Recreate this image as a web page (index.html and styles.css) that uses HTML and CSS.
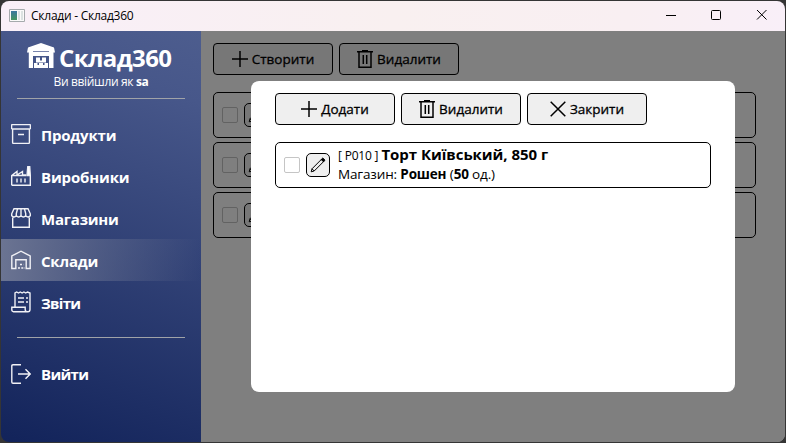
FILE: index.html
```
<!DOCTYPE html>
<html lang="uk">
<head>
<meta charset="utf-8">
<title>Склади - Склад360</title>
<link rel="stylesheet" href="styles.css">
</head>
<body>
<svg class="defs" width="0" height="0">
  <symbol id="plus" viewBox="0 0 16 16"><path d="M8 0v16M0 8h16"/></symbol>
  <symbol id="cross" viewBox="0 0 16 16"><path d="M.7.7l14.6 14.6M15.3.7L.7 15.3"/></symbol>
  <symbol id="trash" viewBox="0 0 16 18"><path d="M0 1.700h16M5 .8h6M2 2v15.200h12V2M6.300 5v9M9.700 5v9"/></symbol>
  <symbol id="pencil" viewBox="0 0 16 16"><path d="M1.200 14.800l.8-3L11.600 2.200l2.200 2.200-9.600 9.600zM2 11.800l2.200 2.200"/><path class="solid" d="M11.200 2.600l1.600-1.600 2.200 2.200-1.600 1.600z"/></symbol>
</svg>
<div class="window">
  <header class="titlebar">
    <svg class="app-icon" viewBox="0 0 16 14"><defs><linearGradient id="g" x2="0" y2="1"><stop offset="0" stop-color="#3c78a0"/><stop offset="1" stop-color="#46965f"/></linearGradient></defs><path fill="#fafafa" stroke="#a5aaad" d="M.5.5h15v12H.5z"/><path fill="url(#g)" d="M2 2h6v9H2z"/><path fill="#dce2e2" d="M9 2h2v9H9zM12 2h2v9h-2z"/></svg>
    <span class="title">Склади - Склад360</span>
    <svg class="controls" viewBox="0 0 104 12"><path d="M1 6.500h10"/><rect x="46.500" y="1.500" width="9" height="9" rx="1"/><path d="M92 1l9.500 9.500M101.500 1L92 10.500"/></svg>
  </header>
  <div class="body">
    <nav class="sidebar">
      <div class="brand">
        <svg class="logo" viewBox="0 0 28 26"><path fill="#fff" d="M14 0L27 4.500 28 9.500h-1.500V25H22V13H6v12H1.800V9.500H0l1-5z"/><path stroke="#7884ac" d="M6 8.500h16"/><path fill="#fff" d="M9 14.500h4v3h2v-3h4v5H9zM7 20h3.500v2h1.500v-2h4v2h1.500v-2H21v5H7z"/></svg>
        <span class="brand-name">Склад360</span>
      </div>
      <div class="login">Ви ввійшли як <b>sa</b></div>
      <hr>
      <ul class="menu">
        <li><svg viewBox="0 0 20 20"><rect x=".6" y=".6" width="18.800" height="4.400" rx=".8"/><path d="M1.600 5v13.500q0 .9.900.9h15q.9 0 .9-.9V5M7 10.500h6"/></svg><span>Продукти</span></li>
        <li><svg viewBox="0 0 20 20"><path d="M.7 19.300V9.500L6 5.500v3.500l5.500-3.500V9h3.800M19.300 9v10.300H.7M.7 9.500H15"/><path class="white" d="M16 9.500L16.800.5h1.900l.6 9z"/><path d="M6 12.500v4M10 12.500v4M14 12.500v4"/></svg><span class="makers">Виробники</span></li>
        <li><svg viewBox="0 0 20 20"><path d="M3 .8h14l2.300 5v2q-2.300 2.500-4.600 0-2.350 2.500-4.700 0-2.350 2.500-4.700 0-2.300 2.500-4.600 0v-2zM5.300 7.800V5.500L6.500 1M10 7.800V1M14.700 7.800V5.500L13.500 1M1.700 9.500v9.800h16.600V9.500"/></svg><span>Магазини</span></li>
        <li class="active"><svg viewBox="0 0 20 20"><path d="M.8 18.500V6L10 1.200 19.200 6v12.500h-4V9.700H4.800v8.800z"/><path stroke-dasharray="2 1.300" d="M7 18h7M9 14.500h3.500"/></svg><span>Склади</span></li>
        <li><svg class="receipt" viewBox="0 0 20 22"><path d="M4 16V2l1.700-1 1.800 1L9.300 1l1.800 1 1.800-1 1.800 1 1.800-1L19 2v16.500q0 2.200-2.200 2.200H2.500Q.8 20.700.8 18.500v-2.300h13.400v2.300q0 2.200 2.200 2.200M7 7h6M7 11h6M15 7h2M15 11h2"/></svg><span class="tight">Звіти</span></li>
      </ul>
      <hr class="second">
      <ul class="menu exit">
        <li><svg viewBox="0 0 20 20"><path d="M10 .8H2Q.8.800.8 2v16q0 1.200 1.200 1.200h8M7 10h12M14.500 5.200L19.200 10l-4.700 4.800"/></svg><span class="tight">Вийти</span></li>
      </ul>
    </nav>
    <main class="content">
      <div class="toolbar">
        <button><svg class="i16"><use href="#plus"/></svg><span>Створити</span></button>
        <button><svg class="i18"><use href="#trash"/></svg><span>Видалити</span></button>
      </div>
      <div class="card"><i class="check"></i><span class="edit"><svg><use href="#pencil"/></svg></span></div>
      <div class="card"><i class="check"></i><span class="edit"><svg><use href="#pencil"/></svg></span></div>
      <div class="card"><i class="check"></i><span class="edit"><svg><use href="#pencil"/></svg></span></div>
      <div class="overlay">
        <section class="dialog">
          <div class="toolbar">
            <button><svg class="i16"><use href="#plus"/></svg><span>Додати</span></button>
            <button><svg class="i18"><use href="#trash"/></svg><span>Видалити</span></button>
            <button><svg class="i16"><use href="#cross"/></svg><span>Закрити</span></button>
          </div>
          <div class="card"><i class="check"></i><span class="edit"><svg><use href="#pencil"/></svg></span>
            <div class="info">
              <div class="line1"><span class="code">[ P010 ]</span> <b class="name">Торт Київський, 850 г</b></div>
              <div class="line2">Магазин: <b>Рошен</b> (<b>50</b> од.)</div>
            </div>
          </div>
        </section>
      </div>
    </main>
  </div>
</div>
</body>
</html>
```
FILE: styles.css
```
* { box-sizing: border-box; }
body {
  margin: 0;
  height: 443px;
  padding: 1px;
  overflow: hidden;
  background: #353535;
  font-family: "Open Sans", "Noto Sans", sans-serif;
  color: #000;
}
.defs { position: absolute; }
svg { flex: none; fill: none; }
span, b { white-space: nowrap; }
.window {
  width: 784px;
  height: 441px;
  display: flex;
  flex-direction: column;
  border-radius: 8px;
  overflow: hidden;
}
.titlebar {
  height: 30px;
  flex: none;
  display: flex;
  align-items: center;
  padding: 0 16px 0 8px;
  background: linear-gradient(90deg, #f9eff8, #f9f0f0 50%, #f9eff2 80%, #f9eff8);
}
.app-icon { width: 16px; height: 14px; margin-top: -1px; }
.title { margin-left: 6px; margin-top: -1px; font-size: 12px; letter-spacing: -0.25px; }
.controls { width: 104px; height: 12px; margin-left: auto; margin-top: -2px; stroke: #000; stroke-width: 1; }
.body { flex: 1; display: flex; min-height: 0; }
.sidebar {
  width: 200px;
  flex: none;
  color: #fff;
  background: linear-gradient(200deg, #4d5d8e, #47578a 15%, #12235a);
}
.brand { display: flex; align-items: center; height: 32px; margin-top: 11px; padding-left: 26px; }
.logo { width: 28px; height: 26px; margin-top: -5px; }
.brand-name { margin-left: 4px; font-size: 24px; line-height: 30px; font-weight: 700; letter-spacing: -0.6px; }
.login { height: 16px; line-height: 16px; font-size: 12px; text-align: center; letter-spacing: -0.35px; }
hr { border: 0; height: 1px; background: #a0a3a8; margin: 8px 16px 0; }
.second { margin-top: 14px; }
.menu { list-style: none; margin: 14px 0 0; padding: 0; }
.menu.exit { margin-top: 15px; }
.menu li { height: 42px; display: flex; align-items: center; padding-left: 10px; font-size: 15px; font-weight: 700; }
.menu svg { width: 20px; height: 20px; margin-right: 10px; stroke: #f1f1f6; stroke-width: 1.4; }
.menu .receipt { height: 22px; }
.menu .active { background: linear-gradient(90deg, #6b7492, rgba(107, 116, 146, 0)); }
.menu span { padding-top: 2px; letter-spacing: -0.2px; }
.menu.exit span { padding-top: 0; }
.menu .makers { letter-spacing: -0.15px; }
.menu .tight { letter-spacing: -0.7px; }
.white { fill: #fff; }
.content { flex: 1; position: relative; background: #fff; padding: 12px 29px 0 12px; }
.toolbar { display: flex; gap: 6px; margin-bottom: 17px; }
button {
  width: 120px;
  height: 32px;
  padding: 0;
  border: 1px solid #000;
  border-radius: 4px;
  background: #efefef;
  color: #000;
  display: flex;
  align-items: center;
  justify-content: center;
  gap: 4px;
  font: 13.5px "Open Sans", "Noto Sans", sans-serif;
  letter-spacing: 0;
  -webkit-text-stroke: 0.3px #000;
}
button svg { stroke: #000; stroke-width: 1.5; }
.i16 { width: 16px; height: 16px; }
.i18 { width: 16px; height: 18px; }
.card {
  height: 46px;
  margin-bottom: 4px;
  border: 1px solid #000;
  border-radius: 5px;
  display: flex;
  align-items: center;
  padding-left: 8px;
}
.check { width: 16px; height: 16px; border: 1px solid #c5c5c5; border-radius: 2px; }
.edit {
  width: 24px;
  height: 24px;
  margin-left: 6px;
  border: 1px solid #000;
  border-radius: 5px;
  background: #efefef;
  display: flex;
  align-items: center;
  justify-content: center;
}
.edit svg { width: 16px; height: 16px; stroke: #000; stroke-width: 1; }
.solid { fill: #000; }
.overlay { position: absolute; inset: 0; background: rgba(0, 0, 0, .5); padding: 50px 0 0 50px; }
.dialog { width: 484px; height: 311px; border-radius: 8px; background: #fff; padding: 12px 24px; }
.info { margin-left: 8px; margin-top: -2px; }
.line1 { height: 20px; line-height: 19px; font-size: 12px; white-space: nowrap; }
.name { font-size: 15px; letter-spacing: -0.03px; }
.code { letter-spacing: -0.2px; }
.line2 { height: 19px; line-height: 19px; font-size: 13.500px; white-space: nowrap; letter-spacing: -0.15px; }
```
